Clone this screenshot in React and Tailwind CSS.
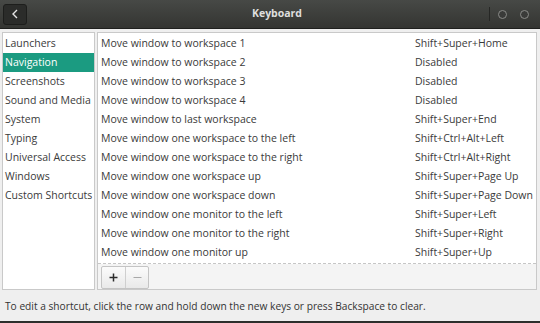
const sections = [
  "Launchers",
  "Navigation",
  "Screenshots",
  "Sound and Media",
  "System",
  "Typing",
  "Universal Access",
  "Windows",
  "Custom Shortcuts",
];

const shortcuts = [
  ["Move window to workspace 1", "Shift+Super+Home"],
  ["Move window to workspace 2", "Disabled"],
  ["Move window to workspace 3", "Disabled"],
  ["Move window to workspace 4", "Disabled"],
  ["Move window to last workspace", "Shift+Super+End"],
  ["Move window one workspace to the left", "Shift+Ctrl+Alt+Left"],
  ["Move window one workspace to the right", "Shift+Ctrl+Alt+Right"],
  ["Move window one workspace up", "Shift+Super+Page Up"],
  ["Move window one workspace down", "Shift+Super+Page Down"],
  ["Move window one monitor to the left", "Shift+Super+Left"],
  ["Move window one monitor to the right", "Shift+Super+Right"],
  ["Move window one monitor up", "Shift+Super+Up"],
];

export default function App() {
  return (
    <div
      className="w-[540px] h-[323px] flex flex-col bg-[#efefef] text-[#3a3a3a] text-[10.5px] overflow-hidden"
      style={{ fontFamily: '"Open Sans", "Noto Sans", sans-serif' }}
    >
      {/* header bar */}
      <div className="h-[29px] shrink-0 flex items-center px-[3px] bg-gradient-to-b from-[#474946] to-[#343532] border-b border-[#1f201e]">
        <div className="w-[24px] h-[21px] rounded-[3px] bg-[#2b2c2a] border border-[#1d1e1c] flex items-center justify-center">
          <svg width="8" height="10" viewBox="0 0 8 10">
            <path d="M6 1 L2 5 L6 9" fill="none" stroke="#e6e6e6" strokeWidth="1.4" />
          </svg>
        </div>
        <div className="flex-1 text-center font-bold text-[#dedede] text-[10.5px] pl-[38px]">Keyboard</div>
        <div className="w-px h-[14px] bg-[#262725] mr-[8px]" />
        <div className="w-[9px] h-[9px] rounded-full border border-[#8b8c89] bg-[#3a3b39] mr-[13px]" />
        <div className="w-[9px] h-[9px] rounded-full border border-[#8b8c89] bg-[#3a3b39] mr-[8px]" />
      </div>

      {/* panels */}
      <div className="flex gap-[2px] px-[2px] pt-[3px] h-[261px] shrink-0">
        <div className="w-[93px] bg-white border border-[#c9c9c9] py-[1px] flex flex-col">
          {sections.map((s) => (
            <div
              key={s}
              className={
                s === "Navigation"
                  ? "h-[19px] flex items-center pl-[2px] whitespace-nowrap bg-[#1b9b81] text-white"
                  : "h-[19px] flex items-center pl-[2px] whitespace-nowrap"
              }
            >
              {s}
            </div>
          ))}
        </div>

        <div className="flex-1 mr-[1px] border border-[#c9c9c9] flex flex-col bg-[#f4f4f4]">
          <div className="bg-white pt-[1px] h-[231px] border-b border-dashed border-[#c6c6c6] pr-[2px]">
            {shortcuts.map(([name, key]) => (
              <div key={name} className="h-[19px] flex items-center pl-[3px] whitespace-nowrap">
                <div className="w-[314px]">{name}</div>
                <div>{key}</div>
              </div>
            ))}
          </div>
          <div className="flex pl-[3px] pt-[2px]">
            <div className="flex border border-[#c4c4c4] rounded-[2px] bg-gradient-to-b from-[#fbfbfb] to-[#e9e9e9]">
              <div className="w-[24px] h-[21px] flex items-center justify-center border-r border-[#cfcfcf] text-[#2a2a2a]">
                <svg width="9" height="9" viewBox="0 0 9 9">
                  <path d="M4.5 0.5 V8.5 M0.5 4.5 H8.5" stroke="#2c2c2c" strokeWidth="1.5" />
                </svg>
              </div>
              <div className="w-[22px] h-[21px] flex items-center justify-center">
                <svg width="9" height="9" viewBox="0 0 9 9">
                  <path d="M0.5 4.5 H8.5" stroke="#a8a8a8" strokeWidth="1" />
                </svg>
              </div>
            </div>
          </div>
        </div>
      </div>

      {/* footer hint */}
      <div className="flex-1 flex items-center pl-[5px] pt-[2px] text-[#333] text-[10.2px]">
        To edit a shortcut, click the row and hold down the new keys or press Backspace to clear.
      </div>
      <div className="h-[2px] bg-[#2d2e2c] shrink-0" />
    </div>
  );
}
